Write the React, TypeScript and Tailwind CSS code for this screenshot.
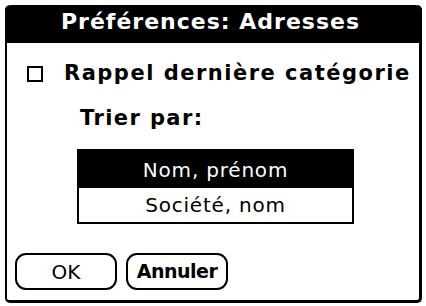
import React from "react";

export default function App() {
  const font = { fontFamily: '"DejaVu Sans", "Liberation Sans", sans-serif' };
  return (
    <div className="w-[426px] h-[306px] bg-white pt-[5px] pl-[5px]" style={font}>
      <div className="w-[417px] h-[298px] border-l-2 border-r-[3px] border-b-[3px] border-black rounded-[5px] flex flex-col">
        <div className="h-[38px] -ml-[2px] -mr-[3px] bg-black text-white rounded-t-[6px] flex items-center justify-center">
          <span className="text-[22px] font-bold leading-none tracking-[1px] whitespace-nowrap -mt-[4px] -ml-[6px]">Préférences: Adresses</span>
        </div>
        <div className="flex items-center mt-[20px] pl-[20px]">
          <div className="w-[16px] h-[16px] border-2 border-black shrink-0"></div>
          <span className="ml-[21px] text-[21px] font-bold leading-none tracking-[1.5px] whitespace-nowrap text-black">Rappel dernière catégorie</span>
        </div>
        <div className="mt-[24px] pl-[73px] text-[21px] font-bold leading-none tracking-[1.4px] text-black">Trier par:</div>
        <div className="mt-[20px] ml-[70px] w-[277px] border-2 border-black flex flex-col">
          <div className="h-[37px] bg-black text-white flex items-center justify-center text-[20px] tracking-[0.8px] leading-none">Nom, prénom</div>
          <div className="h-[34px] bg-white text-black flex items-center justify-center text-[20px] tracking-[0.8px] leading-none">Société, nom</div>
        </div>
        <div className="flex mt-[29px] ml-[8px] gap-[9px]">
          <div className="w-[102px] h-[37px] border-2 border-black rounded-[11px] flex items-center justify-center text-[20px] text-black leading-none">OK</div>
          <div className="w-[102px] h-[37px] border-2 border-black rounded-[11px] flex items-center justify-center text-[19px] font-semibold tracking-[-0.5px] text-black leading-none">Annuler</div>
        </div>
      </div>
    </div>
  );
}
